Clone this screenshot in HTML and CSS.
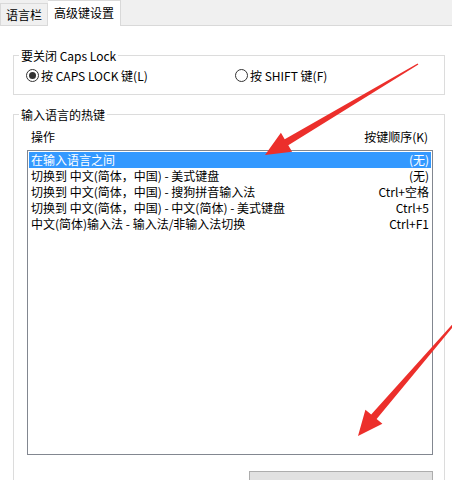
FILE: index.html
```html
<!DOCTYPE html>
<html lang="zh-CN">
<head>
    <meta charset="UTF-8">
    <title>高级键设置</title>
    <link rel="stylesheet" href="styles.css">
</head>
<body>
    <div class="tabs">
        <div class="tab">语言栏</div>
        <div class="tab active">高级键设置</div>
    </div>

    <div class="page">
        <fieldset class="group caps">
            <legend>要关闭 Caps Lock</legend>
            <div class="radios">
                <label class="radio"><span class="dot checked"></span>按 CAPS LOCK 键(L)</label>
                <label class="radio"><span class="dot"></span>按 SHIFT 键(F)</label>
            </div>
        </fieldset>

        <fieldset class="group hotkeys">
            <legend>输入语言的热键</legend>
            <div class="list-head">
                <span>操作</span>
                <span>按键顺序(K)</span>
            </div>
            <div class="list">
                <div class="row selected"><span>在输入语言之间</span><span>(无)</span></div>
                <div class="row"><span>切换到 中文(简体，中国) - 美式键盘</span><span>(无)</span></div>
                <div class="row"><span>切换到 中文(简体，中国) - 搜狗拼音输入法</span><span>Ctrl+空格</span></div>
                <div class="row"><span>切换到 中文(简体，中国) - 中文(简体) - 美式键盘</span><span>Ctrl+5</span></div>
                <div class="row"><span>中文(简体)输入法 - 输入法/非输入法切换</span><span>Ctrl+F1</span></div>
            </div>
            <div class="buttons">
                <button class="btn"></button>
            </div>
        </fieldset>
    </div>

    <!-- annotation arrows drawn over the dialog -->
    <svg class="arrows" width="452" height="480" viewBox="0 0 452 480">
        <polygon points="418.4,64.4 288.3,145.2 292.1,151.7 265,155 280.9,132.7 284.7,139.2 417.6,63.6" />
        <polygon points="460.6,317.6 376.6,418.9 382.4,423.7 358,436 365.4,409.7 371.2,414.5 459.4,316.6" />
    </svg>
</body>
</html>
```

FILE: styles.css
```css
body {
    margin: 0;
    padding: 0;
    width: 452px;
    height: 480px;
    overflow: hidden;
    background: #ffffff;
    font-family: "Noto Sans CJK SC", "Noto Sans", sans-serif;
    font-size: 12px;
    color: #000;
    position: relative;
}

.tabs {
    display: flex;
    align-items: flex-end;
    height: 25px;
    background: #f0f0f0;
    border-bottom: 1px solid #d9d9d9;
}

.tab {
    height: 21px;
    line-height: 21px;
    padding: 0 5px;
    border: 1px solid #d9d9d9;
    border-bottom: none;
    background: #f0f0f0;
}

.tab.active {
    height: 25px;
    line-height: 23px;
    background: #ffffff;
    border-left: none;
    margin-bottom: -1px;
    padding: 0 6px;
}

.page {
    padding: 21px 7px 0 13px;
}

.group {
    margin: 0;
    padding: 0;
    border: 1px solid #dcdcdc;
    min-width: 0;
}

.group legend {
    padding: 0 2px;
    margin-left: 5px;
    line-height: 17px;
}

.caps {
    height: 46px;
}

.radios {
    display: flex;
    padding: 3px 0 0 12px;
}

.radio {
    display: flex;
    align-items: center;
    width: 236px;
    line-height: 17px;
}

.dot {
    width: 11px;
    height: 11px;
    border: 1px solid #333;
    border-radius: 50%;
    margin-right: 2px;
    position: relative;
}

.dot.checked::after {
    content: '';
    position: absolute;
    left: 2px;
    top: 2px;
    width: 7px;
    height: 7px;
    border-radius: 50%;
    background: #333;
}

.hotkeys {
    margin-top: 11px;
    height: 400px;
}

.list-head {
    display: flex;
    justify-content: space-between;
    padding: 5px 16px 0 17px;
    line-height: 17px;
}

.list {
    margin: 5px 11px 0 13px;
    height: 301px;
    border: 1px solid #828790;
    padding: 1px;
}

.row {
    display: flex;
    justify-content: space-between;
    height: 16px;
    line-height: 16px;
    padding: 0 2px;
    white-space: nowrap;
}

.row.selected {
    background: #3399ff;
    color: #ffffff;
}

.buttons {
    display: flex;
    justify-content: flex-end;
    margin: 16px 11px 0 0;
}

.btn {
    width: 184px;
    height: 23px;
    background: #e1e1e1;
    border: 1px solid #adadad;
    font-family: inherit;
    font-size: 12px;
}

.arrows {
    position: absolute;
    left: 0;
    top: 0;
    pointer-events: none;
}

.arrows polygon {
    fill: #ec2f2b;
}
```
